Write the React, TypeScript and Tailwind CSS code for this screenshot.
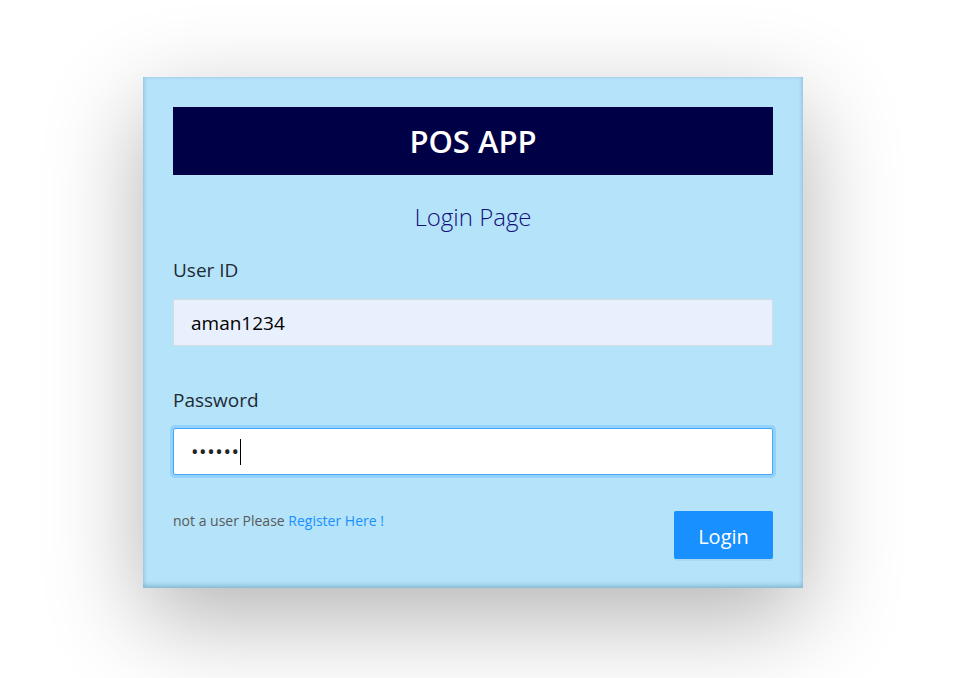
export default function App() {
  return (
    <div
      className="min-h-[678px] bg-white pt-[77px] pl-[143px]"
      style={{ fontFamily: '"Open Sans", "Noto Sans", sans-serif' }}
    >
      <div className="w-[660px] bg-[#b4e3fa] px-[30px] pt-[30px] pb-[29px] shadow-[0_30px_90px_rgba(0,0,0,0.3),inset_0_-3px_5px_rgba(0,60,100,0.2),inset_0_0_4px_rgba(0,60,100,0.12)]">
        {/* Header */}
        <div className="flex h-[68px] items-center justify-center bg-[#000046]">
          <h1 className="text-[31px] font-semibold text-white">POS APP</h1>
        </div>

        <h2 className="mt-[24px] h-[36px] text-center text-[24px] leading-[36px] font-light text-[#12127a]">
          Login Page
        </h2>

        {/* User ID */}
        <label className="mt-[21px] block h-[28px] text-[19px] leading-[28px] text-[#1f2a33]">
          User ID
        </label>
        <input
          readOnly
          value="aman1234"
          className="mt-[15px] block h-[47px] w-full rounded-[2px] border border-[#d4dbe3] bg-[#e8f0fe] px-[17px] text-[19px] text-black outline-none"
        />

        {/* Password */}
        <label className="mt-[40px] block h-[28px] text-[19px] leading-[28px] text-[#1f2a33]">
          Password
        </label>
        <div className="mt-[14px] flex h-[47px] w-full items-center rounded-[2px] border border-[#40a9ff] bg-white px-[17px] shadow-[0_0_0_3px_rgba(24,144,255,0.2)]">
          <span className="text-[20px] leading-none tracking-[0.6px] text-[#222]">••••••</span>
          <span className="h-[26px] w-px bg-black" />
        </div>

        {/* Footer */}
        <div className="mt-[36px] flex items-start justify-between">
          <p className="text-[14px] leading-[20px] text-[#595959]">
            not a user Please <a className="text-[#1890ff]">Register Here !</a>
          </p>
          <button className="h-[48px] w-[99px] rounded-[2px] bg-[#1890ff] pt-[3px] text-[20px] text-white shadow-[0_2px_0_rgba(0,0,0,0.045)]">
            Login
          </button>
        </div>
      </div>
    </div>
  );
}
